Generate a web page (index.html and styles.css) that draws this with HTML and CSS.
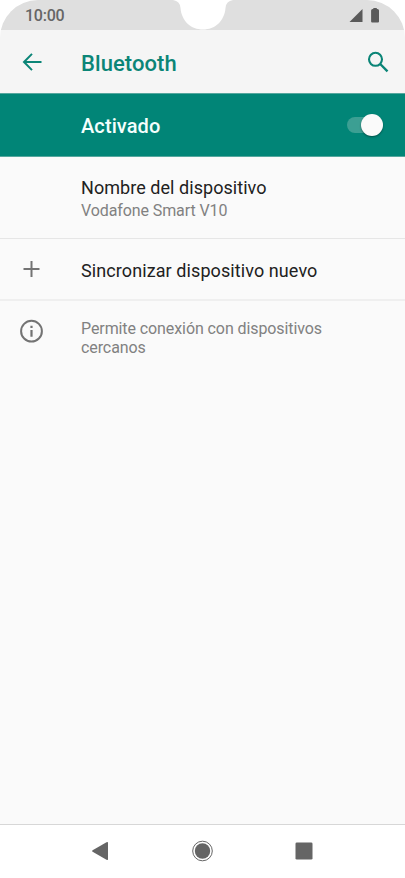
FILE: index.html
```html
<!DOCTYPE html>
<html lang="es">
<head>
<meta charset="utf-8">
<title>Bluetooth</title>
<link rel="stylesheet" href="styles.css">
</head>
<body>
<div class="phone">
  <header class="status">
    <span class="time">10:00</span>
    <svg class="notch" width="60" height="30" viewBox="0 0 60 30"><path d="M0 0H60Q53 1 52.500 8C51.500 21 42 29.500 30 29.500S8.500 21 7.500 8Q7 1 0 0Z" fill="#fff"/></svg>
    <svg class="signals" width="32" height="18" viewBox="0 0 32 18" fill="#5a5a5a"><path d="M.5 16 13.500 3V16Z"/><path d="M24.300 2h3.500v1h.7q1.500 0 1.500 1.500v11q0 1-1 1h-5.900q-1 0-1-1V4.500q0-1.500 1.500-1.500h.7Z"/></svg>
  </header>
  <div class="appbar">
    <svg class="icon" width="24" height="24" viewBox="0 0 24 24" fill="none" stroke="#0b8577" stroke-width="2"><path d="M21.500 11H4.200M12 2.900 4 11l8 8.100"/></svg>
    <h1 class="title">Bluetooth</h1>
    <svg class="search" width="24" height="24" viewBox="0 0 24 24" fill="none" stroke="#0b8577"><circle cx="9.500" cy="8.300" r="6.500" stroke-width="2.100"/><path d="m14.200 13 7.300 7.300" stroke-width="2.400"/></svg>
  </div>
  <div class="toggle">
    <span class="on">Activado</span>
    <span class="switch"><span class="thumb"></span></span>
  </div>
  <main class="list">
    <section class="row device">
      <div class="copy"><div class="name">Nombre del dispositivo</div><div class="sub">Vodafone Smart V10</div></div>
    </section>
    <section class="row pair">
      <svg class="icon" width="24" height="24" viewBox="0 0 24 24" stroke="#737373" stroke-width="2"><path d="M3.500 12H19.500M11.500 4V20"/></svg>
      <div class="name sync">Sincronizar dispositivo nuevo</div>
    </section>
    <section class="row info">
      <svg class="icon" width="24" height="24" viewBox="0 0 24 24"><circle cx="11.500" cy="12.200" r="10.400" fill="none" stroke="#737373" stroke-width="2"/><path d="M10.400 6.800h2.200v2.200h-2.200zM10.400 11.100h2.200v6.600h-2.200z" fill="#737373"/></svg>
      <p class="hint">Permite conexión con dispositivos<br>cercanos</p>
    </section>
  </main>
  <nav class="nav">
    <svg width="24" height="24" viewBox="0 0 24 24"><path d="M4.600 11.200 18.500 3.200q1.500-.7 1.500.5v16.600q0 1.200-1.500.5L4.600 12.800q-1.200-.8 0-1.600Z" fill="#656565"/></svg>
    <svg width="24" height="24" viewBox="0 0 24 24"><circle cx="12.500" cy="12" r="9.800" fill="none" stroke="#656565" stroke-width="1"/><circle cx="12.500" cy="12" r="7.700" fill="#656565"/></svg>
    <svg width="24" height="24" viewBox="0 0 24 24"><rect x="3.500" y="3.500" width="17" height="17" rx="1.300" fill="#656565"/></svg>
  </nav>
</div>
</body>
</html>
```
FILE: styles.css
```css
* { box-sizing: border-box; }
body { margin: 0; background: #fff; font-family: Roboto, "Liberation Sans", sans-serif; }
.phone { width: 405px; height: 878px; display: flex; flex-direction: column; overflow: hidden; border-radius: 38px 38px 0 0; background: #fff; }
.status { height: 30px; flex: none; display: grid; grid-template-columns: 1fr 60px 1fr; align-items: center; background: #dfdfdf; padding: 0 24px 0 25px; }
.time { font-size: 16px; line-height: 20px; font-weight: 500; letter-spacing: -.25px; color: #666; padding-top: 2px; }
.notch { display: block; }
.signals { justify-self: end; }
.appbar { height: 63px; flex: none; display: flex; align-items: center; padding: 2px 15px 0 20px; background: #f5f5f5; }
.icon { flex: none; }
.title { margin: 2px 0 0 37px; font-size: 22px; line-height: 28px; font-weight: 500; letter-spacing: .08px; color: #0b8577; flex: 1; }
.toggle { height: 64px; flex: none; display: flex; align-items: center; justify-content: space-between; padding: 0 22px 1px 81px; background: #018577; border: 1px solid #55a79e; border-width: 1px 0; }
.on { font-size: 20px; font-weight: 500; letter-spacing: .1px; color: #f4fffd; padding-top: 3px; }
.switch { width: 36px; height: 16px; border-radius: 8px; background: #3c9f93; display: flex; align-items: center; justify-content: flex-end; }
.thumb { width: 22px; height: 22px; border-radius: 50%; background: #fafafa; box-shadow: 0 1px 2px rgba(0, 0, 0, .4); }
.list { flex: 1; background: #fafafa; }
.row { display: flex; padding-left: 20px; }
.device { height: 82px; padding: 19px 0 0 81px; border-bottom: 1px solid #e6e6e6; }
.name { font-size: 18px; line-height: 24px; letter-spacing: .05px; color: #212121; }
.sub { font-size: 16px; line-height: 20px; letter-spacing: -.1px; color: #818181; margin-top: 1px; }
.pair { height: 62px; align-items: center; border-bottom: 2px solid #efefef; }
.sync { margin-left: 37px; padding-top: 3px; letter-spacing: .09px; }
.info { padding-top: 18px; }
.hint { margin: 0 0 0 37px; font-size: 16px; line-height: 19px; letter-spacing: -.09px; color: #818181; }
.nav { height: 54px; flex: none; display: flex; align-items: center; justify-content: center; gap: 78px; padding: 0 2px 2px 0; background: #fff; border-top: 1px solid #d7d7d7; }
```
